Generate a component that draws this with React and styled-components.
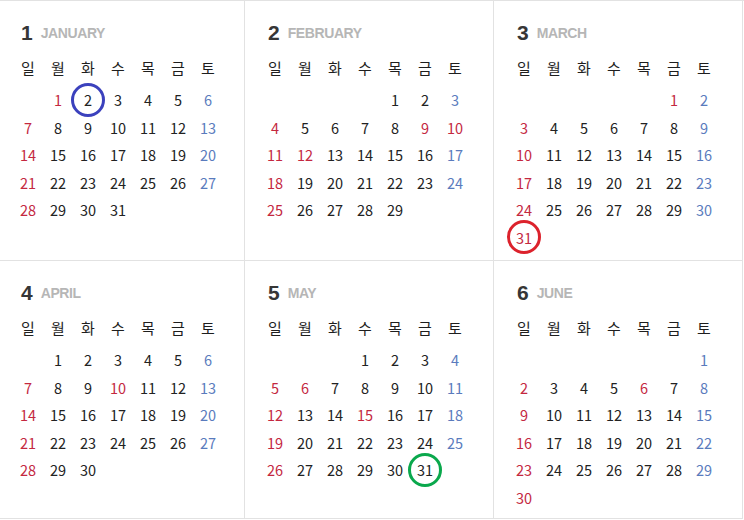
import React from 'react';
import styled, { createGlobalStyle } from 'styled-components';

const GlobalStyle = createGlobalStyle`
  html, body {
    margin: 0;
    padding: 0;
    background: #ffffff;
    overflow: hidden;
  }
  * {
    box-sizing: border-box;
  }
`;

const RED = '#c4283f';
const BLUE = '#5a7bbd';

const months = [
  { no: 1, name: 'JANUARY', start: 1, days: 31, holidays: [1], mark: { day: 2, color: '#3b41bd' } },
  { no: 2, name: 'FEBRUARY', start: 4, days: 29, holidays: [9, 10, 12] },
  { no: 3, name: 'MARCH', start: 5, days: 31, holidays: [1], mark: { day: 31, color: '#dc222c' } },
  { no: 4, name: 'APRIL', start: 1, days: 30, holidays: [10] },
  { no: 5, name: 'MAY', start: 3, days: 31, holidays: [5, 6, 15], mark: { day: 31, color: '#0aa84c' } },
  { no: 6, name: 'JUNE', start: 6, days: 30, holidays: [6] },
];

const weekdays = ['일', '월', '화', '수', '목', '금', '토'];

const Board = styled.div`
  display: grid;
  grid-template-columns: 247px 249px 249px;
  grid-template-rows: 260px 258px;
  margin-left: -2px;
  border-top: 1px solid #e2e2e2;
  font-family: "Noto Sans CJK KR", "Noto Sans", sans-serif;
`;

const MonthCell = styled.section`
  border-right: 1px solid #e2e2e2;
  border-bottom: 1px solid #e2e2e2;
  padding: 18px 0 0 15px;
`;

const Title = styled.div`
  display: flex;
  align-items: center;
  height: 28px;
  padding-left: 8px;
  gap: 8px;
`;

const MonthNo = styled.span`
  font-family: "Liberation Sans", Arial, sans-serif;
  font-weight: 700;
  font-size: 21px;
  color: #363636;
`;

const MonthName = styled.span`
  font-family: "Liberation Sans", Arial, sans-serif;
  font-weight: 700;
  font-size: 14px;
  letter-spacing: -0.4px;
  color: #b6b6b6;
`;

const WeekRow = styled.div`
  display: grid;
  grid-template-columns: repeat(7, 30px);
  height: 28px;
  margin-top: 6px;
  align-items: center;
`;

const WeekDay = styled.span`
  text-align: center;
  font-size: 15px;
  color: #1e1e1e;
`;

const Days = styled.div`
  display: grid;
  grid-template-columns: repeat(7, 30px);
  grid-auto-rows: 27.5px;
  margin-top: 5px;
`;

const Day = styled.span`
  position: relative;
  display: flex;
  align-items: center;
  justify-content: center;
  font-size: 14.5px;
  color: ${(p) => (p.$tone === 'red' ? RED : p.$tone === 'blue' ? BLUE : '#222222')};
`;

const Ring = styled.span`
  position: absolute;
  left: 50%;
  top: 50%;
  width: 34px;
  height: 34px;
  margin: -17px 0 0 -17px;
  border: 3.4px solid ${(p) => p.$color};
  border-radius: 50%;
`;

function Month({ month }) {
  const blanks = Array.from({ length: month.start });
  const days = Array.from({ length: month.days }, (_, i) => i + 1);

  return (
    <MonthCell>
      <Title>
        <MonthNo>{month.no}</MonthNo>
        <MonthName>{month.name}</MonthName>
      </Title>
      <WeekRow>
        {weekdays.map((w) => (
          <WeekDay key={w}>{w}</WeekDay>
        ))}
      </WeekRow>
      <Days>
        {blanks.map((_, i) => (
          <span key={'b' + i} />
        ))}
        {days.map((d) => {
          const dow = (month.start + d - 1) % 7;
          let tone = 'plain';
          if (dow === 0 || month.holidays.includes(d)) tone = 'red';
          else if (dow === 6) tone = 'blue';
          return (
            <Day key={d} $tone={tone}>
              {d}
              {month.mark && month.mark.day === d && <Ring $color={month.mark.color} />}
            </Day>
          );
        })}
      </Days>
    </MonthCell>
  );
}

export default function App() {
  return (
    <>
      <GlobalStyle />
      <Board>
        {months.map((m) => (
          <Month key={m.no} month={m} />
        ))}
      </Board>
    </>
  );
}
